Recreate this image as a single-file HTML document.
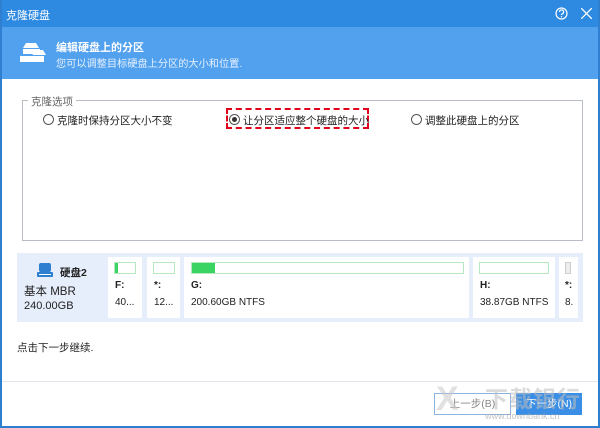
<!DOCTYPE html><html><head><meta charset="utf-8"><style>
body{margin:0;width:600px;height:428px;position:relative;background:#fff;font-family:"Liberation Sans","Noto Sans CJK SC",sans-serif;font-size:10.5px;color:#222;overflow:hidden}
.a{position:absolute;white-space:nowrap}
.tb{left:0;top:0;width:600px;height:27px;background:#2e8ae0;color:#fff;font-size:11px}
.hd{left:0;top:27px;width:600px;height:52px;background:#52a1ef;color:#fff}
.bd{left:0;top:0;width:2px;height:428px;background:#2e7fd0}
.bd2{right:0;top:0;width:2px;height:428px;background:#2e7fd0}
.bd3{left:0;bottom:0;width:600px;height:2px;background:#2e7fd0}
.rad{display:inline-block;width:9px;height:9px;border:1px solid #555;border-radius:50%;vertical-align:-1px;margin-right:3px;position:relative;background:#fff}
.rad.on::after{content:"";position:absolute;left:2px;top:2px;width:5px;height:5px;border-radius:50%;background:#333}
.card{top:257px;height:61px;background:#fff}
.bar{position:absolute;left:6px;top:5px;height:10px;border:1px solid #b8e8c0;background:#fff}
.fill{height:100%;background:#3ad463}
.l1{position:absolute;left:7px;top:23px;font-size:10px;font-weight:bold}
.l2{position:absolute;left:7px;top:40px;font-size:10px}
</style></head><body>
<div class="a tb"><span class="a" style="left:6px;top:7px">克隆硬盘</span>
<svg class="a" style="left:555px;top:7px" width="13" height="13" viewBox="0 0 13 13"><circle cx="6.5" cy="6.5" r="5.5" fill="none" stroke="#fff" stroke-width="1.2"/><path d="M4.6 5a2 2 0 1 1 2.6 1.8c-.6.3-.7.6-.7 1.3" fill="none" stroke="#fff" stroke-width="1.2"/><circle cx="6.5" cy="9.8" r=".7" fill="#fff"/></svg>
<svg class="a" style="left:581px;top:8px" width="11" height="11"><path d="M0 0L11 11M11 0L0 11" stroke="#fff" stroke-width="1.3"/></svg></div>
<div class="a hd">
<svg class="a" style="left:18px;top:14px" width="30" height="24" viewBox="0 0 30 24"><path d="M8 2h10l3 5H5z" fill="#fff"/><path d="M5 8h17v5H5z" fill="#fff"/><path d="M17 9h8l3 5H14z" fill="#fff"/><path d="M2 15h24v6H2z" fill="#fff"/><path d="M2 14h13" stroke="#52a1ef" stroke-width="1"/></svg>
<span class="a" style="left:56px;top:12px;font-weight:bold;font-size:11px">编辑硬盘上的分区</span>
<span class="a" style="left:56px;top:28px;font-size:10.2px;color:#e4f0fc">您可以调整目标硬盘上分区的大小和位置.</span></div>
<div class="a" style="left:22px;top:100px;width:559px;height:139px;border:1px solid #b8bcc4"></div>
<span class="a" style="left:28px;top:94px;background:#fff;padding:0 3px;color:#666">克隆选项</span>
<span class="a" style="left:43px;top:113px"><span class="rad"></span>克隆时保持分区大小不变</span>
<div class="a" style="left:226px;top:108px;width:143px;height:21px;border:2px dashed #e0001a;box-sizing:border-box"></div>
<span class="a" style="left:229px;top:113px"><span class="rad on"></span>让分区适应整个硬盘的大小</span>
<span class="a" style="left:411px;top:113px"><span class="rad"></span>调整此硬盘上的分区</span>
<div class="a" style="left:17px;top:253px;width:566px;height:69px;background:#e5eefa"></div>
<svg class="a" style="left:37px;top:263px" width="16" height="14"><rect x="2" y="0" width="12" height="9" rx="2" fill="#2e7fd0"/><rect x="0" y="9" width="16" height="5" rx="1" fill="#2e7fd0"/><rect x="2" y="11" width="12" height="1" fill="#fff"/></svg>
<span class="a" style="left:60px;top:265px;font-weight:bold">硬盘2</span>
<span class="a" style="left:24px;top:283px;font-size:11.5px">基本 MBR</span>
<span class="a" style="left:24px;top:300px;font-size:11px">240.00GB</span>
<div class="a card" style="left:108px;width:34px"><div class="bar" style="width:20px"><div class="fill" style="width:3px"></div></div><span class="l1">F:</span><span class="l2">40...</span></div>
<div class="a card" style="left:147px;width:33px"><div class="bar" style="width:20px"></div><span class="l1">*:</span><span class="l2">12...</span></div>
<div class="a card" style="left:184px;width:285px"><div class="bar" style="left:7px;width:271px"><div class="fill" style="width:23px"></div></div><span class="l1">G:</span><span class="l2">200.60GB NTFS</span></div>
<div class="a card" style="left:473px;width:82px"><div class="bar" style="width:68px"></div><span class="l1">H:</span><span class="l2">38.87GB NTFS</span></div>
<div class="a card" style="left:559px;width:19px"><div class="bar" style="width:4px;border-color:#ccc;background:#eee"></div><span class="l1" style="left:6px">*:</span><span class="l2" style="left:6px">8.</span></div>
<span class="a" style="left:17px;top:340px">点击下一步继续.</span>
<div class="a" style="left:0;top:381px;width:600px;height:1px;background:#e2e6ec"></div>
<div class="a" style="left:434px;top:393px;width:77px;height:22px;border:1px solid #8cb4e0;box-sizing:border-box;color:#888;text-align:center;line-height:20px">上一步(B)</div>
<div class="a" style="left:516px;top:393px;width:66px;height:22px;background:#3a8ee6;color:#fff;text-align:center;line-height:22px">下一步(N)</div>
<span class="a" style="left:436px;top:380px;font-size:34px;color:rgba(200,200,200,.55);font-weight:bold">X</span>
<span class="a" style="left:485px;top:380px;font-size:23px;color:rgba(190,190,190,.55);font-weight:bold;letter-spacing:1px">下载银行</span>
<span class="a" style="left:485px;top:411px;font-size:9px;color:rgba(170,170,170,.7)">www.downbank.cn</span>
<div class="a bd"></div><div class="a bd2"></div><div class="a bd3"></div>
</body></html>
